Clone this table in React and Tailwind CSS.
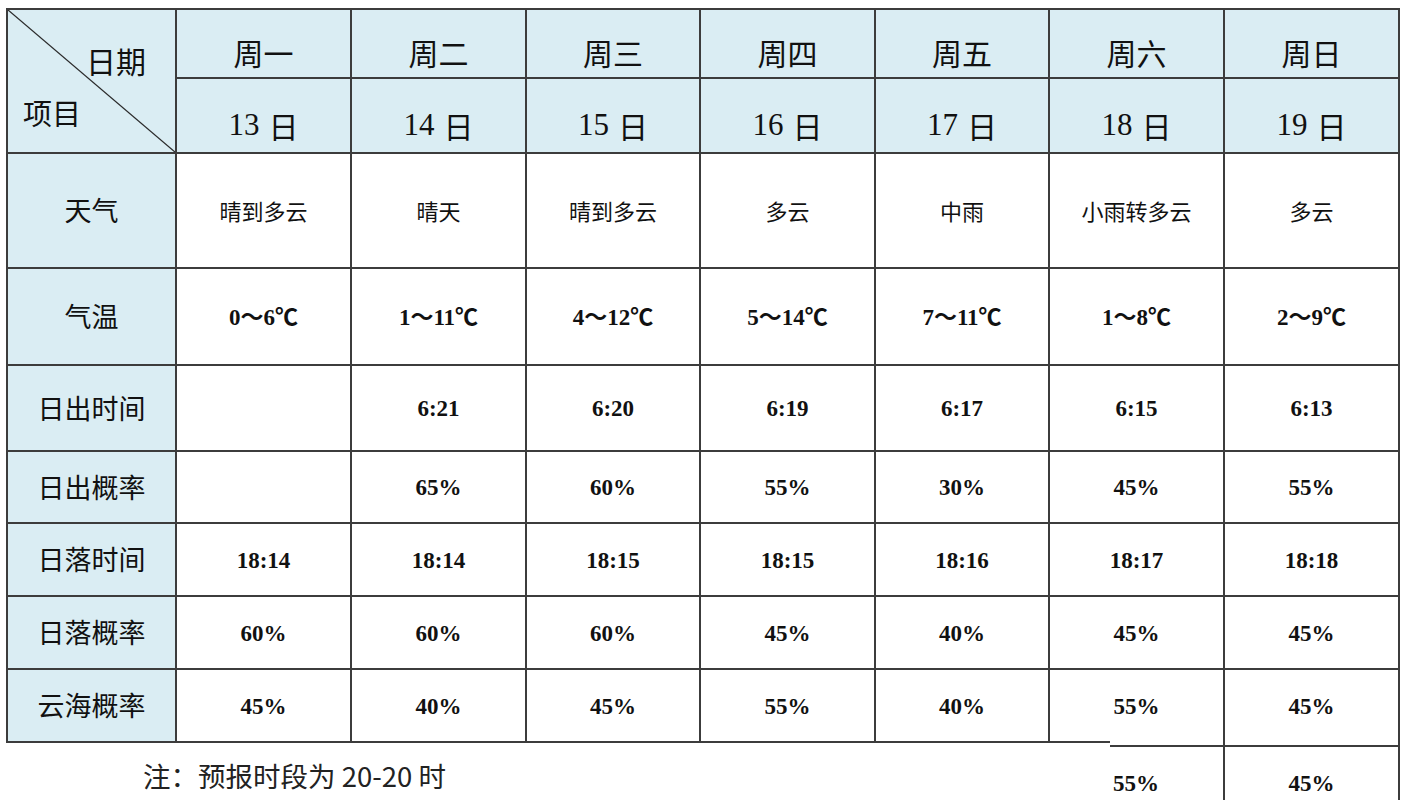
import React from "react";

const days = ["周一", "周二", "周三", "周四", "周五", "周六", "周日"];
const dates = ["13", "14", "15", "16", "17", "18", "19"];
const rows = [
  { label: "天气", kind: "text", values: ["晴到多云", "晴天", "晴到多云", "多云", "中雨", "小雨转多云", "多云"] },
  { label: "气温", kind: "num", values: ["0～6℃", "1～11℃", "4～12℃", "5～14℃", "7～11℃", "1～8℃", "2～9℃"] },
  { label: "日出时间", kind: "num", values: ["", "6:21", "6:20", "6:19", "6:17", "6:15", "6:13"] },
  { label: "日出概率", kind: "num", values: ["", "65%", "60%", "55%", "30%", "45%", "55%"] },
  { label: "日落时间", kind: "num", values: ["18:14", "18:14", "18:15", "18:15", "18:16", "18:17", "18:18"] },
  { label: "日落概率", kind: "num", values: ["60%", "60%", "60%", "45%", "40%", "45%", "45%"] },
  { label: "云海概率", kind: "num", values: ["45%", "40%", "45%", "55%", "40%", "55%", "45%"] },
];

const sans = "font-['Noto_Sans_CJK_SC',sans-serif]";
const serifNum = "font-['Liberation_Serif','Noto_Sans_CJK_SC',serif]";

export default function App() {
  return (
    <div className="h-[800px] w-[1406px] overflow-hidden bg-white pl-[6px] pt-[8px] text-[#111]">
      {/* main table */}
      <div className="grid w-fit grid-cols-[167px_173px_173px_172px_173px_172px_173px_173px] grid-rows-[67px_73px_113px_95px_84px_70px_71px_71px_71px] gap-[2px] bg-[#3c3c3c] px-[2px] pt-[2px]">
        {/* corner */}
        <div className={`relative row-span-2 bg-[#daedf3] ${sans}`}>
          <svg className="absolute inset-0 h-full w-full" viewBox="0 0 167 142" preserveAspectRatio="none">
            <line x1="0" y1="0" x2="167" y2="142" stroke="#2a2a2a" strokeWidth="1.3" />
          </svg>
          <div className="relative flex h-full flex-col pt-[35px]">
            <div className="self-end pr-[29px] text-[30px] leading-[30px]">日期</div>
            <div className="mt-[22px] pl-[15px] text-[29px] leading-[30px]">项目</div>
          </div>
        </div>
        {days.map((d) => (
          <div key={d} className={`flex items-center justify-center bg-[#daedf3] pt-[17px] text-[30px] ${sans}`}>
            {d}
          </div>
        ))}
        {dates.map((d) => (
          <div key={d} className="flex items-center justify-center bg-[#daedf3] pt-[19px] text-[31px]">
            <span className={serifNum}>{d}</span>
            <span className={`ml-[9px] ${sans} text-[30px]`}>日</span>
          </div>
        ))}
        {rows.map((r) => (
          <React.Fragment key={r.label}>
            <div className={`flex items-center justify-center bg-[#daedf3] text-[27px] ${sans}`}>{r.label}</div>
            {r.values.map((v, i) => (
              <div
                key={i}
                className={
                  r.kind === "text"
                    ? `flex items-center justify-center bg-white text-[22px] ${sans}`
                    : `flex items-center justify-center bg-white pt-[3px] text-[23px] font-bold ${serifNum}`
                }
              >
                {v}
              </div>
            ))}
          </React.Fragment>
        ))}
      </div>

      {/* bottom strip */}
      <div className="flex">
        <div className="w-[1043px] shrink-0">
          <div className="h-[2px] bg-[#3c3c3c]" />
          <div className={`pl-[137px] pt-[15px] text-[27.5px] leading-[34px] text-[#222] ${sans}`}>
            注：预报时段为 20-20 时
          </div>
        </div>
        <div className="w-[174px] shrink-0">
          <div className="h-[2px] w-[61px] bg-[#3c3c3c]" />
          <div className="h-[2px]" />
          <div className="ml-[61px] h-[2px] bg-[#3c3c3c]" />
          <div className={`flex h-[72px] items-center justify-center pt-[3px] text-[23px] font-bold ${serifNum}`}>55%</div>
        </div>
        <div className="w-[177px] shrink-0 border-x-2 border-[#3c3c3c]">
          <div className="h-[4px]" />
          <div className="h-[2px] bg-[#3c3c3c]" />
          <div className={`flex h-[72px] items-center justify-center pt-[3px] text-[23px] font-bold ${serifNum}`}>45%</div>
        </div>
      </div>
    </div>
  );
}
